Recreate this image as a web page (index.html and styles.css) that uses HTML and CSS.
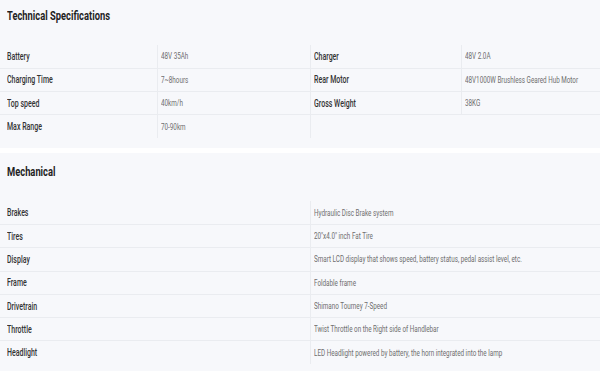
FILE: index.html
```html
<!DOCTYPE html>
<html>
<head>
<meta charset="utf-8">
<link rel="stylesheet" href="styles.css">
</head>
<body>
<section class="block block-first">
  <h2 class="title"><span class="sq">Technical Specifications</span></h2>
  <table class="spec spec-four">
    <colgroup><col class="c1"><col class="c2"><col class="c3"><col class="c4"></colgroup>
    <tr><th><span class="sq">Battery</span></th><td><span class="sq">48V 35Ah</span></td><th><span class="sq">Charger</span></th><td><span class="sq">48V 2.0A</span></td></tr>
    <tr><th><span class="sq">Charging Time</span></th><td><span class="sq">7~8hours</span></td><th><span class="sq">Rear Motor</span></th><td><span class="sq">48V1000W Brushless Geared Hub Motor</span></td></tr>
    <tr><th><span class="sq">Top speed</span></th><td><span class="sq">40km/h</span></td><th><span class="sq">Gross Weight</span></th><td><span class="sq">38KG</span></td></tr>
    <tr><th><span class="sq">Max Range</span></th><td><span class="sq">70-90km</span></td><td class="empty" colspan="2"></td></tr>
  </table>
</section>
<section class="block block-second">
  <h2 class="title"><span class="sq">Mechanical</span></h2>
  <table class="spec spec-two">
    <colgroup><col class="m1"><col class="m2"></colgroup>
    <tr><th><span class="sq">Brakes</span></th><td><span class="sq">Hydraulic Disc Brake system</span></td></tr>
    <tr><th><span class="sq">Tires</span></th><td><span class="sq">20"x4.0" inch Fat Tire</span></td></tr>
    <tr><th><span class="sq">Display</span></th><td><span class="sq">Smart LCD display that shows speed, battery status, pedal assist level, etc.</span></td></tr>
    <tr><th><span class="sq">Frame</span></th><td><span class="sq">Foldable frame</span></td></tr>
    <tr><th><span class="sq">Drivetrain</span></th><td><span class="sq">Shimano Tourney 7-Speed</span></td></tr>
    <tr><th><span class="sq">Throttle</span></th><td><span class="sq">Twist Throttle on the Right side of Handlebar</span></td></tr>
    <tr><th><span class="sq">Headlight</span></th><td><span class="sq">LED Headlight powered by battery, the horn integrated into the lamp</span></td></tr>
  </table>
</section>
</body>
</html>
```

FILE: styles.css
```css
html, body {
  margin: 0;
  padding: 0;
  background: #ffffff;
  font-family: Roboto, "Liberation Sans", sans-serif;
  overflow: hidden;
}

.block {
  background: #f7f8fb;
}

.block-first {
  padding: 9px 0 10px;
}

.block-second {
  margin-top: 5px;
  padding: 12px 0 7px;
}

.title {
  margin: 0 0 22px 7px;
  font-size: 13px;
  line-height: 14px;
  font-weight: 700;
  color: #1f1f1f;
}

.title .sq {
  transform: scaleX(0.72);
}

.sq {
  display: inline-block;
  white-space: nowrap;
  transform: scaleX(0.7);
  transform-origin: left center;
}

.spec {
  width: 600px;
  table-layout: fixed;
  border-collapse: collapse;
}

.c1 { width: 157px; }
.c2 { width: 153px; }
.c3 { width: 151px; }
.c4 { width: 139px; }
.m1 { width: 310px; }
.m2 { width: 290px; }

.spec th,
.spec td {
  height: 23.3px;
  padding: 0 0 0 3px;
  text-align: left;
  vertical-align: middle;
  border-bottom: 1px solid #eaecf0;
  border-left: 1px solid #eaecf0;
  box-sizing: border-box;
  overflow: hidden;
}

.spec tr > :first-child {
  border-left: none;
  padding-left: 7px;
}

.spec tr:last-child > * {
  border-bottom: none;
}

.spec th {
  font-size: 10px;
  font-weight: 500;
  color: #333333;
}

.spec td {
  font-size: 9px;
  font-weight: 400;
  color: #6e6e6e;
}
```
